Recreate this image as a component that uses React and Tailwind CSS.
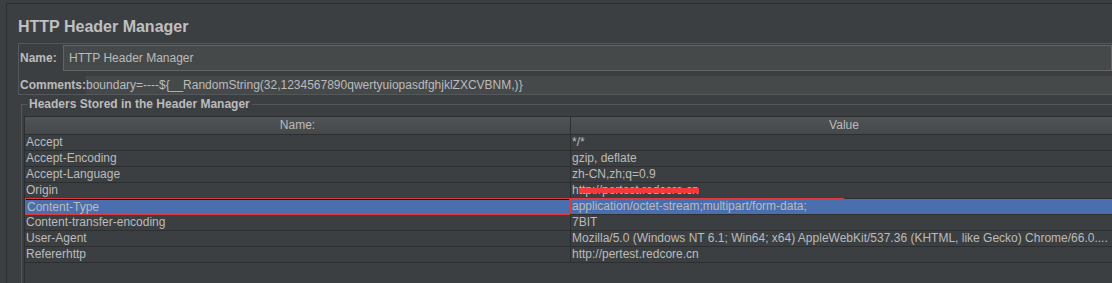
import React from 'react';

// header rows shown in the table
const headers = [
  { name: 'Accept', value: '*/*' },
  { name: 'Accept-Encoding', value: 'gzip, deflate' },
  { name: 'Accept-Language', value: 'zh-CN,zh;q=0.9' },
  { name: 'Origin', value: 'http://pertest.redcore.cn', scribble: true },
  { name: 'Content-Type', value: 'application/octet-stream;multipart/form-data;', selected: true },
  { name: 'Content-transfer-encoding', value: '7BIT' },
  {
    name: 'User-Agent',
    value: 'Mozilla/5.0 (Windows NT 6.1; Win64; x64) AppleWebKit/537.36 (KHTML, like Gecko) Chrome/66.0....',
  },
  { name: 'Refererhttp', value: 'http://pertest.redcore.cn' },
];

const HeaderRow = ({ row }) => (
  <div
    className={`relative grid grid-cols-[546px_546px] h-[16px] border-b border-[#2c2e30] leading-[15px] ${
      row.selected ? 'bg-[#4b6eaf]' : ''
    }`}
  >
    <div
      className={`pl-[1px] border-r border-[#2c2e30] whitespace-nowrap overflow-hidden ${
        row.selected ? 'border-t border-l border-t-black border-l-black' : ''
      }`}
    >
      {row.name}
    </div>
    <div className="relative pl-[1px] whitespace-nowrap">
      {row.value}
      {row.scribble && (
        <span className="absolute z-10 left-[9px] top-[5px] w-[119px] h-[5px] bg-[#f23a3a]" />
      )}
    </div>
    {row.selected && (
      <>
        <span className="absolute z-10 left-0 -top-[1px] w-[545px] h-[17px] border border-[#e0393b]" />
        <span className="absolute z-10 left-[545px] -top-[1px] w-[274px] h-[16px] border border-[#e0393b]" />
      </>
    )}
  </div>
);

export default function App() {
  return (
    <div className="w-[1112px] h-[283px] overflow-hidden bg-[#3c3f41] text-[#bbbbbb] text-[12px] font-['Liberation_Sans',Arial,sans-serif]">
      <div className="h-[280px] mt-[3px] ml-[6px] border-t border-l border-[#2d2f31] pl-[11px] flex flex-col">
        {/* title */}
        <h1 className="shrink-0 h-[39px] pt-[13px] text-[16px] leading-[19px] font-bold text-[#c0c0c0]">
          HTTP Header Manager
        </h1>

        {/* name / comments panel */}
        <div className="shrink-0 border-t border-l border-b border-[#55585b] pt-[1px]">
          <div className="flex items-center h-[26px] pl-[1px]">
            <span className="w-[43px] font-bold">Name:</span>
            <div className="flex-1 h-[26px] border border-[#646464] bg-[#45494a] pl-[5px] leading-[24px]">
              HTTP Header Manager
            </div>
          </div>
          <div className="flex h-[18px] mt-[5px] pl-[1px] leading-[18px]">
            <span className="font-bold">Comments:</span>
            <div className="flex-1 bg-[#45494a] whitespace-nowrap overflow-hidden">
              boundary=----${'{'}__RandomString(32,1234567890qwertyuiopasdfghjklZXCVBNM,){'}'}
            </div>
          </div>
        </div>

        {/* headers table */}
        <fieldset className="shrink-0 h-[190px] mt-[2px] ml-[3px] border-t border-l border-[#55585b] pl-[2px] min-w-0">
          <legend className="ml-[3px] px-[2px] font-bold leading-[14px]">
            Headers Stored in the Header Manager
          </legend>
          <div className="mt-[5px] h-[200px] border-l border-t border-[#2c2e30] w-[1100px]">
            <div className="grid grid-cols-[546px_546px] h-[18px] border-b border-[#2c2e30] bg-gradient-to-b from-[#515457] to-[#45484b] leading-[17px]">
              <div className="text-center border-r border-[#2c2e30]">Name:</div>
              <div className="text-center">Value</div>
            </div>
            {headers.map((row) => (
              <HeaderRow key={row.name} row={row} />
            ))}
          </div>
        </fieldset>
      </div>
    </div>
  );
}
